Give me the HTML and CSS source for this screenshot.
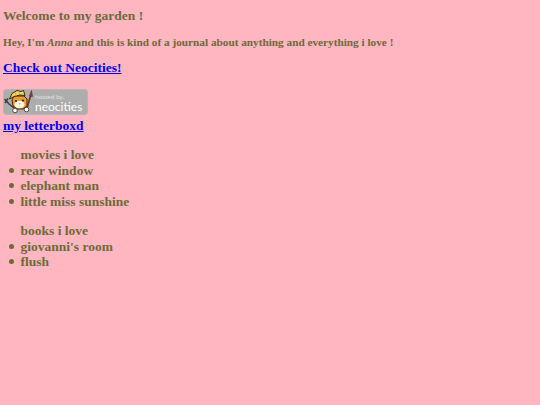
FILE: index.html
```html
<!DOCTYPE html>
<html>

<head>
    <title>Welcome to my garden</title>
    <link rel="stylesheet" href="styles.css">
</head>

<body>
    <h3 class="welcome">Welcome to my garden !</h3>
    <p class="intro">Hey, I'm <em>Anna</em> and this is kind of a journal about anything and everything i love !</p>
    <p class="check"><a href="#">Check out Neocities!</a></p>

    <a href="#" class="badge">
        <svg width="85" height="26" viewBox="0 0 85 26">
            <rect x="0.5" y="0.5" width="84" height="25" rx="3" fill="#adadad" stroke="#b9b3b3" />
            <!-- wrench -->
            <path d="M1.5 10 L6 15 M5 9.5 L2 14 M6 15 L11 19" stroke="#3d3d3d" stroke-width="1.5" fill="none" />
            <!-- brush -->
            <path d="M24 19 L27.5 7" stroke="#6b3a2a" stroke-width="1.8" />
            <path d="M26.5 7 L28.5 1.5 L29.5 7.5 Z" fill="#b5302a" stroke="#4a2018" stroke-width="0.5" />
            <!-- head -->
            <path d="M9 11 L10 17 L14 20 L20 20 L24 17 L24 10 L21 7 L11 7 Z" fill="#ee9a33" stroke="#3d2814" stroke-width="1" />
            <ellipse cx="16.5" cy="15.5" rx="5" ry="3.8" fill="#fff6e6" />
            <circle cx="13" cy="12" r="1.1" fill="#222" />
            <circle cx="20" cy="11.5" r="1.1" fill="#222" />
            <path d="M16 14.5 L17.5 14.5 L16.8 15.5 Z" fill="#7a3a20" />
            <!-- hard hat -->
            <path d="M6.5 10 L9 4.5 L14 1.5 L18 2.5 L20.5 1.5 L22 6.5 L17 6 L11 7.5 Z" fill="#f5d45c" stroke="#3d2814" stroke-width="1" />
            <path d="M12 3.5 L13.5 7 M16 2.5 L17 6" stroke="#c79a2a" stroke-width="0.8" />
            <!-- paws -->
            <circle cx="12" cy="21.5" r="2.3" fill="#fff" stroke="#3d2814" stroke-width="0.8" />
            <circle cx="23.5" cy="20.5" r="2.3" fill="#fff" stroke="#3d2814" stroke-width="0.8" />
            <text x="32" y="10" class="badge-small">hosted by,</text>
            <text x="32" y="21.5" class="badge-big">neocities</text>
        </svg>
    </a>
    <a href="#" class="letterboxd">my letterboxd</a>

    <ul class="list">
        <span>movies i love</span>
        <li>rear window</li>
        <li>elephant man</li>
        <li>little miss sunshine</li>
    </ul>
    <ul class="list">
        <span>books i love</span>
        <li>giovanni's room</li>
        <li>flush</li>
    </ul>
</body>

</html>
```

FILE: styles.css
```css
body {
    margin: 3px;
    background-color: lightpink;
    color: #6b6b38;
    font-family: "Liberation Serif", "Times New Roman", serif;
    font-weight: bold;
    font-size: 13.5px;
    line-height: 15.5px;
}

.welcome {
    font-size: 13.5px;
    margin: 5px 0 0 0;
}

.intro {
    font-size: 11.25px;
    line-height: 13px;
    margin: 12px 0 0 0;
}

.check {
    margin: 11.5px 0 0 0;
}

.badge {
    display: block;
    margin-top: 13.5px;
    width: 85px;
    line-height: 0;
}

.letterboxd {
    display: block;
    margin-top: 2.5px;
}

.badge-small {
    font-family: "Open Sans", sans-serif;
    font-size: 6px;
    font-weight: normal;
    fill: #e6e6e6;
}

.badge-big {
    font-family: Lato, sans-serif;
    font-size: 12px;
    font-weight: 400;
    fill: #fff;
}

.list {
    margin: 14px 0 0 0;
    padding-left: 17.5px;
}

.list span {
    display: block;
}

.list li {
    display: flex;
    align-items: center;
    list-style: none;
    margin-left: -11.5px;
}

.list li::before {
    content: "";
    width: 5px;
    height: 5px;
    margin-right: 6.5px;
    border-radius: 50%;
    background-color: currentColor;
}
```
